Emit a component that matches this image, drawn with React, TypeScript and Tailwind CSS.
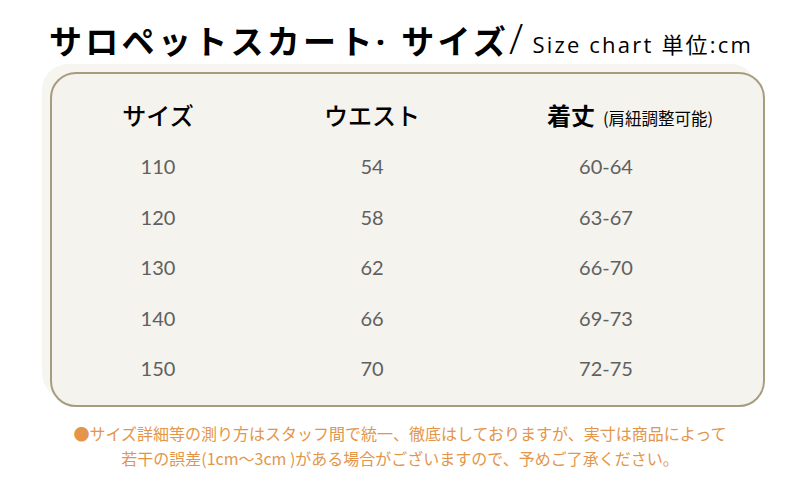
import React from "react";

const rows = [
  ["110", "54", "60-64"],
  ["120", "58", "63-67"],
  ["130", "62", "66-70"],
  ["140", "66", "69-73"],
  ["150", "70", "72-75"],
];

const jp = { fontFamily: '"Noto Sans CJK JP", "Noto Sans", sans-serif' };
const num = { fontFamily: 'Lato, "Noto Sans CJK JP", sans-serif' };
const latin = { fontFamily: '"Open Sans", "Noto Sans CJK JP", sans-serif' };

const SizeChart = () => {
  return (
    <div className="w-[800px] h-[494px] bg-white relative overflow-hidden" style={jp}>
      <div className="flex items-end pl-[49px] pt-[14px] h-[58px]">
        <h1 className="text-[33px] font-bold leading-none tracking-[3.3px] text-black whitespace-nowrap">
          サロペットスカート
          <span style={latin} className="font-bold tracking-normal">·</span>
          <span className="ml-[16px]">サイズ</span>
        </h1>
        <span className="text-[42px] leading-none text-black font-light ml-[0px] mb-[-1px]" style={latin}>/</span>
        <span
          className="text-[22px] leading-none text-black ml-[9px] mb-[3px] tracking-[2.2px] whitespace-nowrap"
          style={latin}
        >
          Size chart 単位:cm
        </span>
      </div>

      <div className="ml-[50px] mt-[14px] w-[715px] h-[335px] rounded-[26px] border-2 border-[#a89c7f] bg-[#f5f3ee] shadow-[-8px_-8px_0_#f7f5ef]">
        <div className="flex items-center h-[52px] mt-[15px] text-[24px] text-black">
          <div className="w-[212px] text-center font-medium">サイズ</div>
          <div className="w-[216px] text-center font-medium">ウエスト</div>
          <div className="w-[252px] flex items-baseline justify-center pl-[48px]">
            <span className="font-bold">着丈</span>
            <span className="text-[16.5px] ml-[8px]">(肩紐調整可能)</span>
          </div>
        </div>
        {rows.map((r) => (
          <div key={r[0]} className="flex items-center h-[50.5px] text-[20px] text-[#606060]" style={num}>
            <div className="w-[212px] text-center">{r[0]}</div>
            <div className="w-[216px] text-center">{r[1]}</div>
            <div className="w-[252px] text-center">{r[2]}</div>
          </div>
        ))}
      </div>

      <div className="mt-[14px] text-center text-[16px] leading-[25px] text-[#e3964a]">
        <p>●サイズ詳細等の測り方はスタッフ間で統一、徹底はしておりますが、実寸は商品によって</p>
        <p>若干の誤差(1cm〜3cm )がある場合がございますので、予めご了承ください。</p>
      </div>
    </div>
  );
};

export default function App() {
  return <SizeChart />;
}
